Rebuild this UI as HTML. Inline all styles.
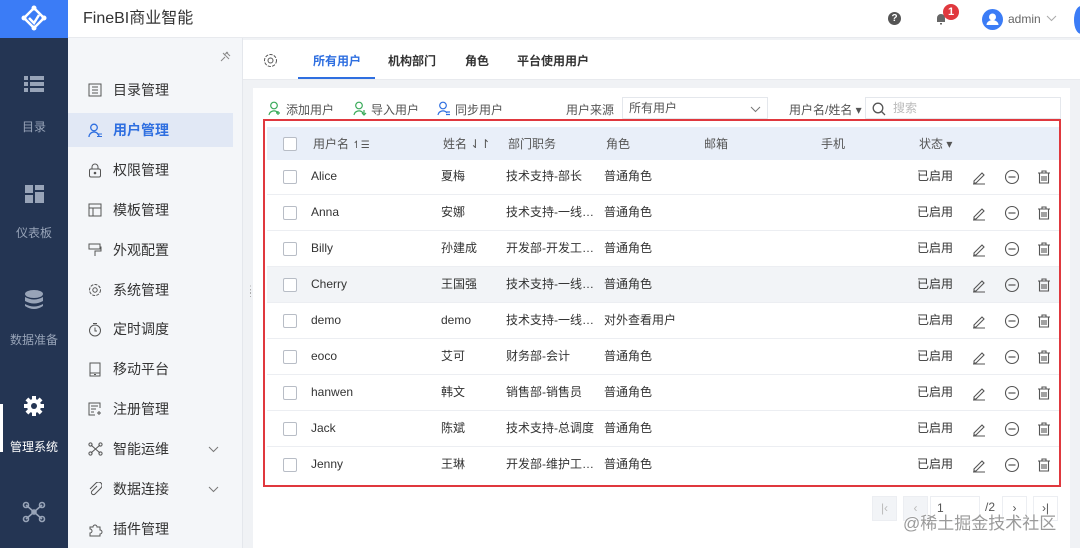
<!DOCTYPE html>
<html><head><meta charset="utf-8"><style>
*{margin:0;padding:0;box-sizing:border-box}
body{width:1080px;height:548px;overflow:hidden;font-family:"Liberation Sans","Noto Sans CJK SC",sans-serif;background:#f0f2f5;position:relative;color:#333}
.abs{position:absolute}
.top{left:0;top:0;width:1080px;height:38px;background:#fff;border-bottom:1px solid #e8eaee}
.logo{left:0;top:0;width:68px;height:38px;background:#3b7cf6}
.side{left:0;top:38px;width:68px;height:510px;background:#243553}
.side .it{position:absolute;width:68px;text-align:center;color:#98a4b8;font-size:12px}
.nav{left:68px;top:38px;width:175px;height:510px;background:#f4f6f9;border-right:1px solid #e4e7ec}
.nav .n{position:absolute;left:0;width:165px;height:34px;font-size:14px;color:#333;line-height:34px;padding-left:45px}
.nav .n svg{position:absolute;left:20px;top:10px}
.tabs{left:243px;top:40px;width:837px;height:40px;background:#fff;border-bottom:1px solid #e8eaee}
.tabs span{position:absolute;top:12px;font-size:12px;font-weight:bold;color:#333}
.card{left:253px;top:88px;width:817px;height:460px;background:#fff}
.tb{left:263px;top:119px;width:798px;height:368px;border:2px solid #e0383e}
.row{position:absolute;left:2px;width:792px;height:36px;border-bottom:1px solid #eceef2;font-size:12px;color:#333}
.row span{position:absolute;top:0;line-height:34px;height:34px;white-space:nowrap}
.cb{position:absolute;left:16px;top:11px;width:14px;height:14px;border:1px solid #b8bdc6;border-radius:2px;background:#fff}
.pg{position:absolute;top:496px;height:25px;border:1px solid #eceef2;background:#fff;font-size:12px;color:#555;text-align:center;line-height:23px}
</style></head><body>
<div class="abs top"></div>
<div class="abs logo"><svg width="68" height="38" viewBox="0 0 68 38"><g fill="none" stroke="#fff" stroke-width="2.5"><path d="M34 8 L44 18 L34 28 L24 18 Z"/><path d="M29 18 L34 23 L39 15"/></g><circle cx="34" cy="8" r="2.5" fill="#fff"/><circle cx="24" cy="18" r="2.5" fill="#fff"/><circle cx="44" cy="18" r="2.5" fill="#fff"/><circle cx="34" cy="28" r="2.5" fill="#fff"/></svg></div>
<div class="abs" style="left:83px;top:8px;font-size:16px;line-height:22px;color:#333">FineBI商业智能</div>
<div class="abs" style="left:888px;top:12px;width:13px;height:13px;border-radius:50%;background:#555;color:#fff;font-size:10px;font-weight:bold;text-align:center;line-height:13px">?</div>
<svg class="abs" style="left:934px;top:12px" width="14" height="14" viewBox="0 0 14 14"><path d="M3 10 V6 a4 4 0 0 1 8 0 V10 H3Z M6 11 h2 v1.5 h-2z" fill="#666"/></svg>
<div class="abs" style="left:943px;top:4px;width:16px;height:16px;border-radius:50%;background:#e0383e;color:#fff;font-size:11px;font-weight:bold;text-align:center;line-height:16px">1</div>
<div class="abs" style="left:982px;top:9px;width:21px;height:21px;border-radius:50%;background:#3b7cf6"><svg width="21" height="21"><circle cx="10.5" cy="8" r="3.5" fill="#fff"/><path d="M4.5 16 a6 5 0 0 1 12 0z" fill="#fff"/></svg></div>
<div class="abs" style="left:1008px;top:12px;font-size:12px;color:#666">admin</div>
<svg class="abs" style="left:1046px;top:15px" width="11" height="7"><path d="M1 1 L5.5 5.5 L10 1" fill="none" stroke="#aaa"/></svg>
<div class="abs" style="left:1074px;top:6px;width:14px;height:28px;border-radius:50%;background:#3b7cf6"></div>

<div class="abs side">
<svg class="abs" style="left:24px;top:38px" width="20" height="16"><g fill="#98a4b8"><rect x="0" y="0" width="4" height="4"/><rect x="6" y="0" width="14" height="4"/><rect x="0" y="6" width="4" height="4"/><rect x="6" y="6" width="14" height="4"/><rect x="0" y="12" width="4" height="4"/><rect x="6" y="12" width="14" height="4"/></g></svg>
<div class="it" style="top:80px">目录</div>
<svg class="abs" style="left:25px;top:147px" width="19" height="18"><g fill="#98a4b8"><rect x="0" y="0" width="8" height="8"/><rect x="10" y="0" width="9" height="5"/><rect x="10" y="7" width="9" height="11"/><rect x="0" y="10" width="8" height="8"/></g></svg>
<div class="it" style="top:186px">仪表板</div>
<svg class="abs" style="left:25px;top:252px" width="18" height="20"><g fill="#98a4b8"><ellipse cx="9" cy="4" rx="9" ry="4"/><path d="M0 7 q9 5 18 0 v4 q-9 5 -18 0z"/><path d="M0 14 q9 5 18 0 v2 q-9 6 -18 0z"/></g></svg>
<div class="it" style="top:293px">数据准备</div>
<div class="abs" style="left:0;top:366px;width:3px;height:48px;background:#fff"></div>
<svg class="abs" style="left:24px;top:358px" width="20" height="20" viewBox="0 0 20 20"><g fill="#fff"><circle cx="10" cy="10" r="7"/><rect x="8" y="0" width="4" height="20"/><rect x="0" y="8" width="20" height="4"/><rect x="8" y="0" width="4" height="20" transform="rotate(45 10 10)"/><rect x="8" y="0" width="4" height="20" transform="rotate(-45 10 10)"/></g><circle cx="10" cy="10" r="3" fill="#243553"/></svg>
<div class="it" style="top:400px;color:#fff">管理系统</div>
<svg class="abs" style="left:22px;top:463px" width="24" height="22"><g fill="none" stroke="#98a4b8" stroke-width="1.6"><path d="M4 4 L20 18 M20 4 L4 18"/><circle cx="4" cy="4" r="2.5"/><circle cx="20" cy="4" r="2.5"/><circle cx="4" cy="18" r="2.5"/><circle cx="20" cy="18" r="2.5"/><circle cx="12" cy="11" r="2"/></g></svg>
</div>

<div class="abs nav">
<svg class="abs" style="left:150px;top:12px" width="14" height="14"><path d="M3 11 L7 7 M5 3 L11 9 M8 2 L12 6 M6 5 L10 2" stroke="#888" fill="none"/></svg>
<div class="n" style="top:35px"><svg width="14" height="14"><rect x="1" y="1" width="12" height="12" fill="none" stroke="#555"/><path d="M4 4h6M4 7h6M4 10h6" stroke="#555"/></svg>目录管理</div>
<div class="n" style="top:75px;background:#e1e8f5;color:#2f6fe0;font-weight:bold"><svg width="15" height="15"><circle cx="6" cy="4.5" r="3.3" fill="none" stroke="#2f6fe0" stroke-width="1.3"/><path d="M1 14 a5 5 0 0 1 10 0" fill="none" stroke="#2f6fe0" stroke-width="1.3"/><path d="M9 11h5M9 13.5h5" stroke="#2f6fe0"/></svg>用户管理</div>
<div class="n" style="top:115px"><svg width="14" height="15"><rect x="1.5" y="6" width="11" height="8" rx="1.5" fill="none" stroke="#555"/><path d="M4 6V4a3 3 0 0 1 6 0v2" fill="none" stroke="#555"/><circle cx="7" cy="10" r="1.3" fill="#555"/></svg>权限管理</div>
<div class="n" style="top:155px"><svg width="14" height="14"><rect x="1" y="1" width="12" height="12" fill="none" stroke="#555"/><path d="M1 5h12M5 5v8" stroke="#555"/></svg>模板管理</div>
<div class="n" style="top:195px"><svg width="14" height="14"><rect x="1" y="1" width="11" height="5" fill="none" stroke="#555"/><path d="M12 4h1v4H7v5" fill="none" stroke="#555"/></svg>外观配置</div>
<div class="n" style="top:235px"><svg width="14" height="14"><circle cx="7" cy="7" r="5.5" fill="none" stroke="#555" stroke-dasharray="3 1.2"/><circle cx="7" cy="7" r="2.2" fill="none" stroke="#555"/></svg>系统管理</div>
<div class="n" style="top:274px"><svg width="14" height="15"><circle cx="7" cy="8.5" r="5.5" fill="none" stroke="#555"/><path d="M5 1.5h4M7 5.5v3.5h2" fill="none" stroke="#555"/></svg>定时调度</div>
<div class="n" style="top:314px"><svg width="14" height="15"><rect x="2" y="1" width="10" height="13" fill="none" stroke="#555"/><path d="M2 11h10M6 12.5h2" stroke="#555"/></svg>移动平台</div>
<div class="n" style="top:354px"><svg width="14" height="14"><path d="M12 6V1H1v12h6M3 4h7M3 7h5M3 10h3M9 11h4M11 9v4" fill="none" stroke="#555"/></svg>注册管理</div>
<div class="n" style="top:394px"><svg width="15" height="14"><g fill="none" stroke="#555"><path d="M3 3l9 8M12 3l-9 8"/><circle cx="2.5" cy="2.5" r="1.6"/><circle cx="12.5" cy="2.5" r="1.6"/><circle cx="2.5" cy="11.5" r="1.6"/><circle cx="12.5" cy="11.5" r="1.6"/></g></svg>智能运维<svg style="left:140px;top:14px" width="11" height="7"><path d="M1 1l4.5 4.5L10 1" fill="none" stroke="#777"/></svg></div>
<div class="n" style="top:434px"><svg width="14" height="14"><path d="M9 4L4 9a2 2 0 0 0 3 3l6-6a3.5 3.5 0 0 0-5-5L2 7" fill="none" stroke="#555"/></svg>数据连接<svg style="left:140px;top:14px" width="11" height="7"><path d="M1 1l4.5 4.5L10 1" fill="none" stroke="#777"/></svg></div>
<div class="n" style="top:474px"><svg width="15" height="15"><path d="M2 5h3a2 2 0 1 1 4 0h3v3a2 2 0 1 1 0 4v2H2v-3a2 2 0 1 0 0-4z" fill="none" stroke="#555"/></svg>插件管理</div>
</div>
<div class="abs" style="left:246px;top:287px;font-size:9px;color:#aaa;line-height:4px">⋮<br>⋮</div>

<div class="abs tabs">
<svg class="abs" style="left:20px;top:13px" width="15" height="15"><circle cx="7.5" cy="7.5" r="6" fill="none" stroke="#555" stroke-dasharray="3.2 1.3"/><circle cx="7.5" cy="7.5" r="2.5" fill="none" stroke="#555"/></svg>
<span style="left:70px;color:#2f6fe0">所有用户</span>
<div class="abs" style="left:55px;top:37px;width:77px;height:2px;background:#2f6fe0"></div>
<span style="left:145px">机构部门</span>
<span style="left:222px">角色</span>
<span style="left:274px">平台使用用户</span>
</div>
<div class="abs card"></div>
<svg class="abs" style="left:268px;top:101px" width="14" height="15"><circle cx="6" cy="4.5" r="3.3" fill="none" stroke="#3aaa5a" stroke-width="1.2"/><path d="M1 14a5 5 0 0 1 9-2M10 10v4M8 12h4" fill="none" stroke="#3aaa5a" stroke-width="1.2"/></svg>
<div class="abs" style="left:286px;top:101px;font-size:12px;color:#555">添加用户</div>
<svg class="abs" style="left:353px;top:101px" width="14" height="15"><circle cx="6" cy="4.5" r="3.3" fill="none" stroke="#3aaa5a" stroke-width="1.2"/><path d="M1 14a5 5 0 0 1 9-2M11 9v5M9 12l2 2 2-2" fill="none" stroke="#3aaa5a" stroke-width="1.2"/></svg>
<div class="abs" style="left:371px;top:101px;font-size:12px;color:#555">导入用户</div>
<svg class="abs" style="left:437px;top:101px" width="14" height="15"><circle cx="6" cy="4.5" r="3.3" fill="none" stroke="#2f6fe0" stroke-width="1.2"/><path d="M1 14a5 5 0 0 1 9-2M9 11h4M9 13.5h4" fill="none" stroke="#2f6fe0" stroke-width="1.2"/></svg>
<div class="abs" style="left:455px;top:101px;font-size:12px;color:#555">同步用户</div>
<div class="abs" style="left:566px;top:101px;font-size:12px;color:#555">用户来源</div>
<div class="abs" style="left:622px;top:97px;width:146px;height:22px;border:1px solid #e4e7ec;font-size:12px;line-height:20px;color:#555;padding:0 6px">所有用户<svg style="position:absolute;right:6px;top:8px" width="11" height="7"><path d="M1 1l4.5 4.5L10 1" fill="none" stroke="#777"/></svg></div>
<div class="abs" style="left:789px;top:101px;font-size:12px;color:#555">用户名/姓名 ▾</div>
<div class="abs" style="left:865px;top:97px;width:196px;height:22px;border:1px solid #e4e7ec;font-size:12px;line-height:20px;color:#bbb;padding:0 0 0 27px">搜索<svg style="position:absolute;left:6px;top:4px" width="14" height="14"><circle cx="6" cy="6" r="4.8" fill="none" stroke="#555" stroke-width="1.3"/><path d="M9.5 9.5L13 13" stroke="#555" stroke-width="1.3"/></svg></div>

<div class="abs tb">
<div class="row" style="top:6px;height:33px;background:#e9eff9;border:none;color:#555"><div class="cb" style="top:10px"></div><span style="left:46px">用户名 <small>↿☰</small></span><span style="left:176px">姓名 ⇃↾</span><span style="left:241px">部门职务</span><span style="left:339px">角色</span><span style="left:437px">邮箱</span><span style="left:554px">手机</span><span style="left:652px">状态 ▾</span></div>
</div>
<div class="abs" style="left:265px;top:121px;width:794px;height:364px">
<div class="row" style="top:38px"><div class="cb"></div><span style="left:44px">Alice</span><span style="left:174px">夏梅</span><span style="left:239px">技术支持-部长</span><span style="left:337px">普通角色</span><span style="left:650px">已启用</span></div>
<div class="row" style="top:74px"><div class="cb"></div><span style="left:44px">Anna</span><span style="left:174px">安娜</span><span style="left:239px">技术支持-一线…</span><span style="left:337px">普通角色</span><span style="left:650px">已启用</span></div>
<div class="row" style="top:110px"><div class="cb"></div><span style="left:44px">Billy</span><span style="left:174px">孙建成</span><span style="left:239px">开发部-开发工…</span><span style="left:337px">普通角色</span><span style="left:650px">已启用</span></div>
<div class="row" style="top:146px;background:#f2f4f7"><div class="cb"></div><span style="left:44px">Cherry</span><span style="left:174px">王国强</span><span style="left:239px">技术支持-一线…</span><span style="left:337px">普通角色</span><span style="left:650px">已启用</span></div>
<div class="row" style="top:182px"><div class="cb"></div><span style="left:44px">demo</span><span style="left:174px">demo</span><span style="left:239px">技术支持-一线…</span><span style="left:337px">对外查看用户</span><span style="left:650px">已启用</span></div>
<div class="row" style="top:218px"><div class="cb"></div><span style="left:44px">eoco</span><span style="left:174px">艾可</span><span style="left:239px">财务部-会计</span><span style="left:337px">普通角色</span><span style="left:650px">已启用</span></div>
<div class="row" style="top:254px"><div class="cb"></div><span style="left:44px">hanwen</span><span style="left:174px">韩文</span><span style="left:239px">销售部-销售员</span><span style="left:337px">普通角色</span><span style="left:650px">已启用</span></div>
<div class="row" style="top:290px"><div class="cb"></div><span style="left:44px">Jack</span><span style="left:174px">陈斌</span><span style="left:239px">技术支持-总调度</span><span style="left:337px">普通角色</span><span style="left:650px">已启用</span></div>
<div class="row" style="top:326px;border:none"><div class="cb"></div><span style="left:44px">Jenny</span><span style="left:174px">王琳</span><span style="left:239px">开发部-维护工…</span><span style="left:337px">普通角色</span><span style="left:650px">已启用</span></div>
</div>
<svg class="abs" style="left:0;top:0" width="1080" height="548">
<defs><g id="ics"><path d="M-7 7h12M-6 4l8-8 2 2-8 8h-2z" fill="none" stroke="#555" stroke-width="1.1" transform="translate(980 0)"/><circle cx="1012" cy="0" r="6.5" fill="none" stroke="#555" stroke-width="1.1"/><path d="M1008.5 0h7" stroke="#555" stroke-width="1.2"/><path d="M1038 -4h12M1042 -4v-2h4v2M1039.5 -4v10h9v-10M1042 -1v5M1044 -1v5M1046 -1v5" fill="none" stroke="#555" stroke-width="1.1"/></g></defs>
<use href="#ics" y="177"/><use href="#ics" y="213"/><use href="#ics" y="249"/><use href="#ics" y="285"/><use href="#ics" y="321"/><use href="#ics" y="357"/><use href="#ics" y="393"/><use href="#ics" y="429"/><use href="#ics" y="465"/>
</svg>
<div class="pg" style="left:872px;width:25px;background:#f2f4f7;color:#bbb">|‹</div>
<div class="pg" style="left:903px;width:25px;background:#f2f4f7;color:#bbb">‹</div>
<div class="pg" style="left:930px;width:50px;text-align:left;padding-left:6px">1</div>
<div class="abs" style="left:985px;top:500px;font-size:12px;color:#555">/2</div>
<div class="pg" style="left:1002px;width:25px">›</div>
<div class="pg" style="left:1033px;width:25px">›|</div>
<div class="abs" style="left:903px;top:509px;font-size:17px;color:#9a9a9a;text-shadow:0 0 2px #fff,0 0 2px #fff">@稀土掘金技术社区</div>
</body></html>
